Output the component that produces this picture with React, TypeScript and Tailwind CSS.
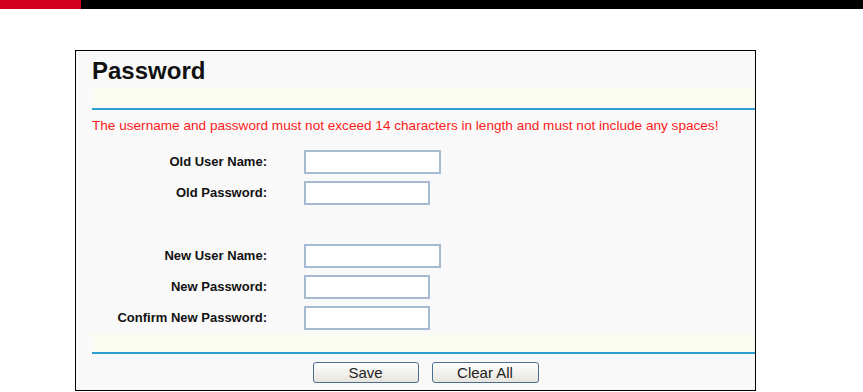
import React from 'react';

const fields = [
  { label: 'Old User Name:', wide: true },
  { label: 'Old Password:', wide: false },
  null,
  { label: 'New User Name:', wide: true },
  { label: 'New Password:', wide: false },
  { label: 'Confirm New Password:', wide: false },
];

export default function App() {
  return (
    <div className="w-[863px] h-[392px] bg-white overflow-hidden" style={{ fontFamily: '"Liberation Sans", Arial, sans-serif' }}>
      {/* top strip */}
      <div className="flex h-[9px]">
        <div className="w-[81px] bg-[#d4001e]" />
        <div className="flex-1 bg-black" />
      </div>

      <div className="ml-[75px] mt-[41px] w-[681px] border border-black bg-[#f9f9f9]">
        <div className="pl-[16px]">
          <h1 className="pt-[6px] text-[24px] leading-[28px] font-bold text-[#111]">Password</h1>
          <div className="mt-[3px] h-[20px] bg-[#fbfcf1]" />
          <div className="h-[2px] bg-[#2a9fd2]" />

          <p className="pt-[8px] text-[13.6px] leading-[16px] text-[#ff1a1a]">
            The username and password must not exceed 14 characters in length and must not include any spaces!
          </p>

          <div className="mt-[12px]">
            {fields.map((f, i) =>
              f ? (
                <div key={i} className="flex items-center h-[31px]">
                  <label className="w-[175px] text-right text-[13px] font-bold text-[#111]">{f.label}</label>
                  <input
                    type="text"
                    className={`ml-[37px] h-[24px] ${f.wide ? 'w-[137px]' : 'w-[126px]'} border-2 border-[#a6bad2] bg-white outline-none`}
                  />
                </div>
              ) : (
                <div key={i} className="h-[32px]" />
              )
            )}
          </div>

          <div className="h-[19px] bg-[#fbfcf1]" />
          <div className="h-[2px] bg-[#2a9fd2]" />

          <div className="flex justify-center gap-[13px] pl-[4px] pt-[8px] pb-[7px]">
            <button className="w-[106px] h-[21px] rounded-[3px] border border-[#4d6c93] bg-gradient-to-b from-white to-[#e6e4dc] text-[15px] leading-[18px] text-[#222]">
              Save
            </button>
            <button className="w-[107px] h-[21px] rounded-[3px] border border-[#4d6c93] bg-gradient-to-b from-white to-[#e6e4dc] text-[15px] leading-[18px] text-[#222]">
              Clear All
            </button>
          </div>
        </div>
      </div>
    </div>
  );
}
